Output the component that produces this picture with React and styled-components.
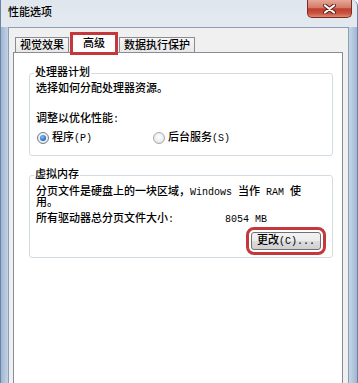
import React from 'react';
import styled, { createGlobalStyle, css } from 'styled-components';

const FONT = `"Liberation Mono", "Noto Sans CJK SC", monospace`;

const Global = createGlobalStyle`
  html, body { margin: 0; padding: 0; background: #ffffff; }
  body { width: 358px; height: 383px; overflow: hidden; }
  * { box-sizing: border-box; }
`;

const Window = styled.div`
  width: 358px;
  height: 383px;
  display: flex;
  flex-direction: column;
  background: linear-gradient(to right, #9fb6d1 0, #c3d3e6 7px, #c3d3e6 calc(100% - 7px), #9fb6d1 100%);
  border-left: 1px solid #6c84a2;
  border-right: 1px solid #6c84a2;
  border-top-right-radius: 6px;
  overflow: hidden;
  font-family: ${FONT};
  font-size: 11px;
  font-weight: 500;
  line-height: 11px;
  color: #000;
`;

const TitleBar = styled.div`
  height: 27px;
  flex: none;
  display: flex;
  justify-content: space-between;
  align-items: flex-start;
  padding-left: 7px;
  background: linear-gradient(#dfe6ee, #e4e9ef);
`;

const Title = styled.div`
  margin-top: 8px;
`;

const CloseBtn = styled.div`
  width: 45px;
  height: 18px;
  margin-right: 5px;
  border: 1px solid #7b2b27;
  border-top: none;
  border-radius: 0 0 5px 5px;
  background: linear-gradient(#e6a897 0%, #d47a69 45%, #bf3e2d 52%, #c9533f 78%, #de8a71 100%);
  display: flex;
  align-items: center;
  justify-content: center;
`;

const Body = styled.div`
  flex: 1;
  display: flex;
  flex-direction: column;
  margin: 0 8px 0 7px;
  padding: 6px 5px 0 4px;
  background: #f0f0f0;
  border: 1px solid #8a9db5;
  border-bottom: none;
`;

const TabRow = styled.div`
  display: flex;
  align-items: flex-end;
  padding-left: 2px;
`;

const Tab = styled.div`
  height: 15px;
  width: ${(p) => p.$w}px;
  padding-top: 3px;
  text-align: center;
  border: 1px solid #898c95;
  border-bottom: none;
  background: linear-gradient(#f6f6f6, #e8e8e8);
  ${(p) =>
    p.$active &&
    css`
      position: relative;
      z-index: 1;
      height: 19px;
      margin: 0 3px -1px 3px;
      padding-top: 4px;
      background: #ffffff;
      outline: 3px solid #c4383c;
      outline-offset: -1px;
    `}
`;

const TabPage = styled.div`
  flex: 1;
  background: #ffffff;
  border: 1px solid #898c95;
  border-bottom: none;
  padding: 20px 9px 0 15px;
`;

const Group = styled.div`
  width: 304px;
  display: flex;
  flex-direction: column;
  border: 1px solid #d3dbe2;
  border-radius: 3px;
  padding: 0 11px ${(p) => p.$pb}px 6px;
  margin-top: ${(p) => p.$mt || 0}px;
`;

const GroupTitle = styled.div`
  align-self: flex-start;
  margin: -6px 0 0 -2px;
  padding: 0 1px;
  background: #ffffff;
`;

const Line = styled.div`
  margin-top: ${(p) => p.$mt || 0}px;
  white-space: nowrap;
`;

const M = styled.span`
  font-size: 10px;
`;

const RadioRow = styled.div`
  margin-top: 7px;
  display: grid;
  grid-template-columns: 116px auto;
  height: 12px;
`;

const Option = styled.div`
  display: flex;
  align-items: center;
  gap: 3px;
  padding-left: 1px;
`;

const Radio = styled.span`
  width: 12px;
  height: 12px;
  border-radius: 50%;
  border: 1px solid ${(p) => (p.$on ? '#6f7f93' : '#a9a9a9')};
  background: radial-gradient(circle at 50% 40%, #ffffff 0%, #ececec 60%, #d6d6d6 100%);
  display: flex;
  align-items: center;
  justify-content: center;
  &::after {
    content: '';
    width: 6px;
    height: 6px;
    border-radius: 50%;
    background: ${(p) =>
      p.$on ? 'radial-gradient(circle at 40% 35%, #8cc6f4 0%, #2f78d0 55%, #1a4d9a 100%)' : 'transparent'};
  }
`;

const SizeRow = styled.div`
  margin-top: 5px;
  display: grid;
  grid-template-columns: 189px auto;
`;

const ButtonRow = styled.div`
  margin-top: 7px;
  display: flex;
  justify-content: flex-end;
`;

const Button = styled.div`
  width: 70px;
  height: 18px;
  border: 1px solid #707070;
  border-radius: 3px;
  background: linear-gradient(#f2f2f2 0%, #ebebeb 50%, #dddddd 51%, #cfcfcf 100%);
  display: flex;
  align-items: center;
  justify-content: center;
  outline: 3px solid #c4383c;
  outline-offset: 2px;
`;

const CloseIcon = () => (
  <svg width="13" height="10" viewBox="0 0 13 10">
    <path d="M2 1.5 L11 8.5 M11 1.5 L2 8.5" stroke="#5e1f1b" strokeWidth="4" strokeLinecap="round" />
    <path d="M2 1.5 L11 8.5 M11 1.5 L2 8.5" stroke="#ffffff" strokeWidth="2.2" strokeLinecap="round" />
  </svg>
);

export default function App() {
  return (
    <>
      <Global />
      <Window>
        <TitleBar>
          <Title>性能选项</Title>
          <CloseBtn>
            <CloseIcon />
          </CloseBtn>
        </TitleBar>
        <Body>
          <TabRow>
            <Tab $w={54}>视觉效果</Tab>
            <Tab $w={44} $active>
              高级
            </Tab>
            <Tab $w={76}>数据执行保护</Tab>
          </TabRow>
          <TabPage>
            <Group $pb={11}>
              <GroupTitle>处理器计划</GroupTitle>
              <Line $mt={5}>选择如何分配处理器资源。</Line>
              <Line $mt={19}>
                调整以优化性能<M>:</M>
              </Line>
              <RadioRow>
                <Option>
                  <Radio $on />
                  <span>
                    程序<M>(P)</M>
                  </span>
                </Option>
                <Option>
                  <Radio />
                  <span>
                    后台服务<M>(S)</M>
                  </span>
                </Option>
              </RadioRow>
            </Group>
            <Group $mt={19} $pb={7}>
              <GroupTitle>虚拟内存</GroupTitle>
              <Line $mt={6}>
                分页文件是硬盘上的一块区域，<M>Windows </M>当作<M> RAM </M>使
              </Line>
              <Line>用。</Line>
              <SizeRow>
                <span>
                  所有驱动器总分页文件大小<M>:</M>
                </span>
                <M>8054 MB</M>
              </SizeRow>
              <ButtonRow>
                <Button>
                  更改<M>(C)...</M>
                </Button>
              </ButtonRow>
            </Group>
          </TabPage>
        </Body>
      </Window>
    </>
  );
}
